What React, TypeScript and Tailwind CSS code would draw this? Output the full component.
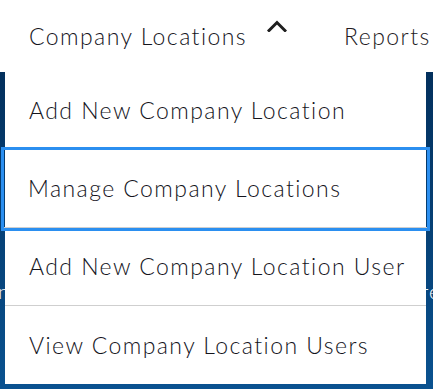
import React from "react";

const items = [
  "Add New Company Location",
  "Manage Company Locations",
  "Add New Company Location User",
  "View Company Location Users",
];

function ChevronUp() {
  return (
    <svg width="20" height="12" viewBox="0 0 20 12" fill="none">
      <path
        d="M2 10.5 L10 2.5 L18 10.5"
        stroke="#1f1f1f"
        strokeWidth="3"
        strokeLinecap="square"
      />
    </svg>
  );
}

export default function App() {
  return (
    <div
      className="relative w-[433px] h-[389px] overflow-hidden bg-white text-[#14141c] font-light tracking-[0.09em]"
      style={{ fontFamily: "Lato, 'Open Sans', sans-serif" }}
    >
      <nav className="h-[72px] flex items-center pl-[29px] whitespace-nowrap text-[23px]">
        <span>Company Locations</span>
        <span className="ml-[20px] mt-[-20px]">
          <ChevronUp />
        </span>
        <span className="ml-[57px] text-[#241a1e]">Reports</span>
      </nav>

      <section className="h-[317px] bg-gradient-to-b from-[#03305d] to-[#0a5290] flex items-start justify-between pt-[204px] text-white text-[20px]">
        <span className="-ml-[8px]">in</span>
        <span className="-mr-[8px]">re</span>
      </section>

      <div className="absolute left-[5px] top-[72px] w-[421px] bg-white flex flex-col">
        {items.map((label, i) => (
          <a
            key={label}
            className={
              "h-[78px] flex items-center pl-[24px] text-[23px] whitespace-nowrap " +
              (i < items.length - 1 ? "border-b border-[#cfcfcf] " : "") +
              (i === 1
                ? "relative outline-solid outline-[3px] outline-[#2b8ff0] -mx-[1px] z-10"
                : "")
            }
          >
            {label}
          </a>
        ))}
      </div>
    </div>
  );
}
